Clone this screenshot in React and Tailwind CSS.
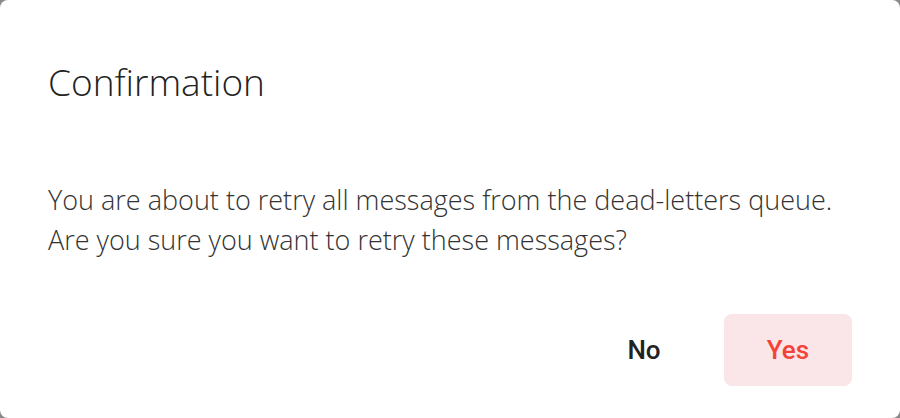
import React from "react";

export default function App() {
  return (
    <div className="w-[900px] h-[418px] bg-[#8a8a8a]">
      <div className="w-full h-full bg-white rounded-lg flex flex-col px-12 pt-[54px] pb-8">
        <h1 className="text-[37px] leading-[56px] font-light text-[#222] font-['Open_Sans',sans-serif]">
          Confirmation
        </h1>
        <div className="mt-[70px] text-[27px] leading-[40px] font-light text-[#333] font-['Open_Sans',sans-serif]">
          <p>You are about to retry all messages from the dead-letters queue.</p>
          <p>Are you sure you want to retry these messages?</p>
        </div>
        <div className="mt-auto flex justify-end gap-4">
          <button className="w-32 h-[72px] rounded-lg text-[26px] font-medium text-[#222] font-['Roboto',sans-serif]">
            No
          </button>
          <button className="w-32 h-[72px] rounded-lg bg-[#fae6e8] text-[26px] font-medium text-[#f44336] font-['Roboto',sans-serif]">
            Yes
          </button>
        </div>
      </div>
    </div>
  );
}
